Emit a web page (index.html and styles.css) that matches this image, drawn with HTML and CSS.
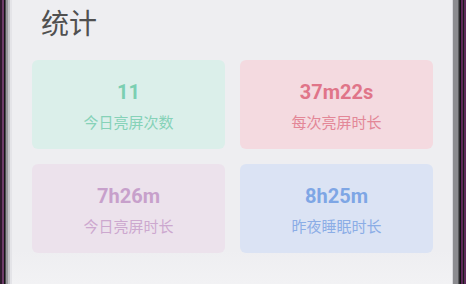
FILE: index.html
```html
<!DOCTYPE html>
<html>
<head>
    <meta charset="utf-8">
    <link rel="stylesheet" href="styles.css">
</head>
<body>
<div class="device">
    <div class="bezel bezel-left"></div>
    <div class="screen">
        <h1 class="title">统计</h1>
        <div class="stats">
            <div class="stat green">
                <div class="value">11</div>
                <div class="label">今日亮屏次数</div>
            </div>
            <div class="stat pink">
                <div class="value">37m22s</div>
                <div class="label">每次亮屏时长</div>
            </div>
            <div class="stat purple">
                <div class="value">7h26m</div>
                <div class="label">今日亮屏时长</div>
            </div>
            <div class="stat blue">
                <div class="value">8h25m</div>
                <div class="label">昨夜睡眠时长</div>
            </div>
        </div>
    </div>
    <div class="bezel bezel-right"></div>
</div>
</body>
</html>
```

FILE: styles.css
```css
html, body {
    margin: 0;
    padding: 0;
    height: 100%;
}

body {
    font-family: Roboto, "Noto Sans CJK SC", sans-serif;
    background: #1a1a1a;
}

.device {
    display: flex;
    height: 284px;
    overflow: hidden;
}

.bezel {
    flex: none;
    height: 100%;
}

.bezel-left {
    width: 12px;
    background: linear-gradient(to right,
        #2e1a2c 0, #2e1a2c 2px,
        #6e3c69 2px, #6e3c69 4px,
        #151515 4px, #151515 5px,
        #4c4c50 5px, #4c4c50 6px,
        #98989c 6px, #98989c 8px,
        #c4c4c8 8px, #c4c4c8 10px,
        #e4e4e8 10px);
}

.bezel-right {
    width: 14px;
    background: linear-gradient(to right,
        #d8d8dc 0, #d8d8dc 1px,
        #8c8c90 1px, #8c8c90 6px,
        #5a5a5e 6px, #5a5a5e 7px,
        #2a2a2c 7px, #2a2a2c 8px,
        #101010 8px, #101010 9px,
        #5e2a5a 9px, #5e2a5a 11px,
        #1c1c1c 11px, #1c1c1c 12px,
        #5e2a5a 12px);
}

.screen {
    flex: 1;
    background: linear-gradient(to bottom, #eeeef1 0, #eeeef1 250px, #f2f2f4 284px);
    padding: 0 19px 0 20px;
}

.title {
    margin: 0 0 16px 0;
    padding-left: 9px;
    font-family: "Noto Sans CJK SC", sans-serif;
    font-size: 28px;
    font-weight: 400;
    line-height: 44px;
    color: #505050;
}

.stats {
    display: grid;
    grid-template-columns: 193px 193px;
    column-gap: 15px;
    row-gap: 15px;
}

.stat {
    height: 89px;
    box-sizing: border-box;
    padding-top: 20px;
    border-radius: 6px;
    text-align: center;
}

.stat .value {
    font-family: Roboto, sans-serif;
    font-weight: 700;
    font-size: 20px;
    line-height: 25px;
}

.stat .label {
    margin-top: 7px;
    font-family: "Noto Sans CJK SC", sans-serif;
    font-size: 15px;
    line-height: 20px;
}

.green {
    background: #dbefea;
    color: #7ccfb2;
}

.green .label {
    color: #86d2b8;
}

.pink {
    background: #f4dae0;
    color: #e07589;
}

.pink .label {
    color: #e38797;
}

.purple {
    background: #ece2ec;
    color: #c7a0cb;
}

.purple .label {
    color: #cca8cf;
}

.blue {
    background: #dbe3f4;
    color: #7ea6e5;
}

.blue .label {
    color: #8badE6;
}
```
